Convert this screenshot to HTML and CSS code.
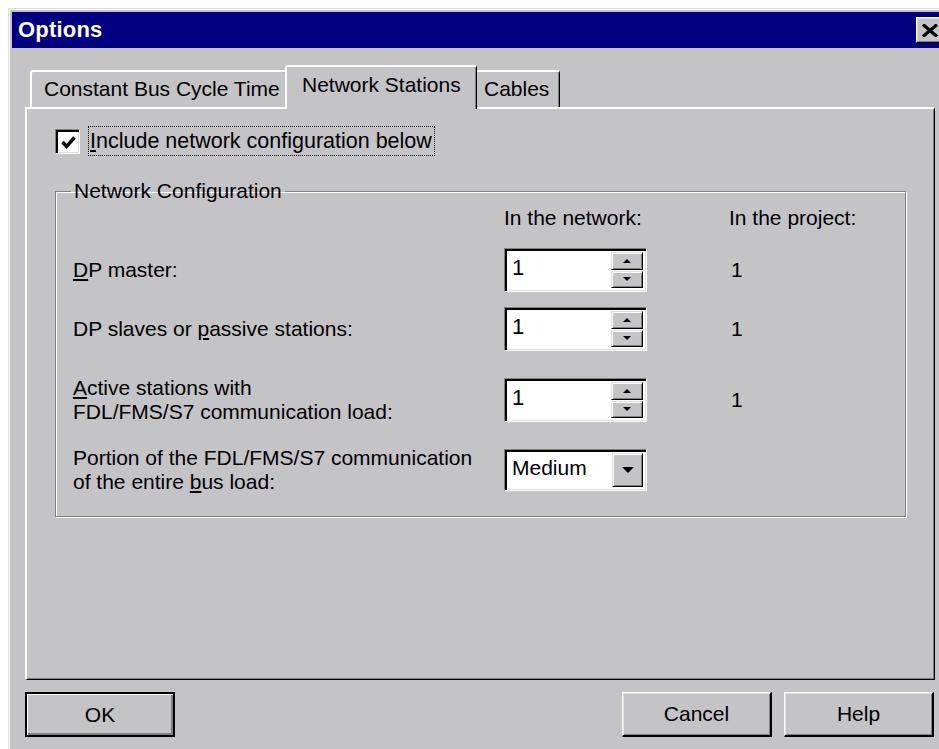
FILE: index.html
```html
<!DOCTYPE html>
<html lang="en">
<head>
<meta charset="utf-8">
<title>Options</title>
<link rel="stylesheet" href="styles.css">
</head>
<body>
<div class="dialog">
  <div class="titlebar">
    <span class="title">Options</span>
    <button class="close" type="button" aria-label="Close">
      <svg width="18" height="13" viewBox="0 0 18 13"><path d="M2 0.5 L16 12.5 M16 0.5 L2 12.5" stroke="#000" stroke-width="3.2" fill="none"/></svg>
    </button>
  </div>
  <div class="dialog-body">
    <div class="tabs">
      <div class="tab tab-first">Constant Bus Cycle Time</div>
      <div class="tab active">Network Stations</div>
      <div class="tab tab-cables">Cables</div>
    </div>
    <div class="panel">
      <label class="check-row">
        <span class="checkbox">
          <svg width="15" height="13" viewBox="0 0 15 13"><path d="M1.5 6 L5.5 10.5 L13.5 1.5" stroke="#000" stroke-width="3.4" fill="none"/></svg>
        </span>
        <span class="focus"><u>I</u>nclude network configuration below</span>
      </label>

      <fieldset class="group">
        <legend>Network Configuration</legend>
        <div class="group-body">
          <div class="row head">
            <span></span>
            <span>In the network:</span>
            <span class="proj">In the project:</span>
          </div>
          <div class="row r1">
            <span class="lbl"><u>D</u>P master:</span>
            <div class="spin">
              <span class="value">1</span>
              <span class="spin-btns"><span class="sbtn"><i class="up"></i></span><span class="sbtn"><i class="down"></i></span></span>
            </div>
            <span class="proj num">1</span>
          </div>
          <div class="row r2">
            <span class="lbl">DP slaves or <u>p</u>assive stations:</span>
            <div class="spin">
              <span class="value">1</span>
              <span class="spin-btns"><span class="sbtn"><i class="up"></i></span><span class="sbtn"><i class="down"></i></span></span>
            </div>
            <span class="proj num">1</span>
          </div>
          <div class="row r3">
            <span class="lbl"><u>A</u>ctive stations with<br>FDL/FMS/S7 communication load:</span>
            <div class="spin">
              <span class="value">1</span>
              <span class="spin-btns"><span class="sbtn"><i class="up"></i></span><span class="sbtn"><i class="down"></i></span></span>
            </div>
            <span class="proj num">1</span>
          </div>
          <div class="row r4">
            <span class="lbl">Portion of the FDL/FMS/S7 communication<br>of the entire <u>b</u>us load:</span>
            <div class="combo">
              <span class="value">Medium</span>
              <span class="cbtn"><i class="drop"></i></span>
            </div>
            <span></span>
          </div>
        </div>
      </fieldset>
    </div>

    <div class="buttons">
      <button class="btn default" type="button">OK</button>
      <div class="btn-group">
        <button class="btn" type="button">Cancel</button>
        <button class="btn" type="button">Help</button>
      </div>
    </div>
  </div>
</div>
</body>
</html>
```

FILE: styles.css
```css
/* Classic 3D dialog, drawn at 1.5x scale */
html, body {
  margin: 0;
  height: 749px;
  overflow: hidden;
  background: #fff;
}

body {
  padding: 8px 0 0 8px;
  font-family: "Liberation Sans", Arial, sans-serif;
  font-size: 21px;
  line-height: 24px;
  color: #000;
}

u { text-decoration-thickness: 1.5px; text-underline-offset: 2px; }

.dialog {
  width: 940px;
  height: 760px;
  background: #c4c3c6;
  border-top: 1px solid #dcdcdc;
  border-left: 1px solid #dcdcdc;
  box-shadow: inset 1px 1px 0 #fff;
  padding: 3px 3px 0 3px;
}

/* Title bar */
.titlebar {
  height: 36px;
  background: #000080;
  display: flex;
  align-items: center;
  padding: 0 3px 0 6px;
}

.title {
  color: #fff;
  font-weight: bold;
  font-size: 22px;
  letter-spacing: 0.2px;
}

.close {
  margin-left: auto;
  width: 33px;
  height: 26px;
  padding: 0 0 0 4px;
  display: flex;
  align-items: center;
  justify-content: flex-start;
  background: #c4c3c6;
  border: 1px solid;
  border-color: #fff #000 #000 #fff;
  box-shadow: inset -1px -1px 0 #808080, inset 1px 1px 0 #dfdfdf;
}

/* Body below the title */
.dialog-body {
  padding: 17px 17px 0 13px;
}

/* Tab strip */
.tabs {
  display: flex;
  align-items: flex-end;
  height: 42px;
  padding-left: 5px;
  position: relative;
  z-index: 1;
}

.tab {
  height: 37px;
  box-sizing: border-box;
  padding: 5px 0 0 12px;
  background: #c4c3c6;
  border-top: 2px solid #fff;
  border-left: 2px solid #fff;
  border-right: 1px solid #000;
  box-shadow: inset -1px 0 0 #808080;
  border-radius: 3px 3px 0 0;
  white-space: nowrap;
}

.tab-first { width: 257px; }
.tab-cables { width: 84px; padding-left: 8px; border-left: none; }

.tab.active {
  height: 44px;
  width: 192px;
  margin: 0 -1px -2px -2px;
  padding: 6px 0 0 15px;
  position: relative;
  z-index: 2;
}

/* Tab page */
.panel {
  height: 573px;
  box-sizing: border-box;
  border: 2px solid;
  border-color: #fff #000 #000 #fff;
  border-right-width: 1px;
  border-bottom-width: 1px;
  box-shadow: inset -1px -1px 0 #808080;
  padding: 16px 28px 0 28px;
}

.check-row {
  display: flex;
  align-items: center;
  height: 32px;
}

.checkbox {
  width: 25px;
  height: 25px;
  box-sizing: border-box;
  background: #fff;
  border: 1px solid;
  border-color: #808080 #fff #fff #808080;
  box-shadow: inset 2px 2px 0 #000, inset -1px -1px 0 #dfdfdf;
  display: flex;
  align-items: center;
  justify-content: center;
  padding: 2px 0 0 2px;
}

.focus {
  margin-left: 8px;
  padding: 2px 2px 2px 1px;
  border: 1px dotted #000;
  font-size: 21.5px;
}

/* Group box */
.group {
  margin: 22px 0 0 0;
  padding: 0;
  border: 1px solid #808080;
  box-shadow: 1px 1px 0 #fff, inset 1px 1px 0 #fff;
  min-width: 0;
}

.group legend {
  margin-left: 15px;
  padding: 0 3px;
  line-height: 24px;
}

.group-body {
  padding: 3px 0 22px 17px;
}

.row {
  display: grid;
  grid-template-columns: 431px 143px 1fr;
  align-items: center;
}

.proj { padding-left: 82px; white-space: nowrap; }
.num { padding-left: 84px; }

.row.r1 { margin-top: 18px; }
.row.r2 { margin-top: 15px; }
.row.r3 { margin-top: 25px; }
.row.r4 { margin-top: 22px; }

/* Sunken fields */
.spin, .combo {
  box-sizing: border-box;
  height: 44px;
  background: #fff;
  border: 1px solid;
  border-color: #808080 #fff #fff #808080;
  box-shadow: inset 2px 2px 0 #000, inset -1px -1px 0 #dfdfdf;
  display: flex;
  align-items: center;
  padding: 3px 3px 3px 3px;
}

.combo { height: 42px; }

.value {
  flex: 1;
  padding-left: 4px;
  padding-bottom: 4px;
}

.spin .value { font-size: 22px; }

.spin-btns {
  display: flex;
  flex-direction: column;
  gap: 1px;
  width: 32px;
  align-self: stretch;
}

.sbtn, .cbtn {
  flex: 1;
  box-sizing: border-box;
  background: #c4c3c6;
  border: 1px solid;
  border-color: #dfdfdf #000 #000 #dfdfdf;
  box-shadow: inset 1px 1px 0 #fff, inset -1px -1px 0 #808080;
  display: flex;
  align-items: center;
  justify-content: center;
}

.cbtn {
  flex: none;
  width: 31px;
  align-self: stretch;
}

.up, .down, .drop {
  width: 0;
  height: 0;
  border-left: 4px solid transparent;
  border-right: 4px solid transparent;
}

.up { border-bottom: 4px solid #000; }
.down { border-top: 4px solid #000; }

.drop {
  border-left-width: 6px;
  border-right-width: 6px;
  border-top: 6px solid #000;
}

/* Dialog buttons */
.buttons {
  margin-top: 12px;
  display: flex;
  justify-content: space-between;
  padding-right: 1px;
}

.btn-group {
  display: flex;
  gap: 12px;
}

.btn {
  width: 150px;
  height: 45px;
  font: inherit;
  color: #000;
  background: #c4c3c6;
  border: 2px solid;
  border-color: #fff #000 #000 #fff;
  border-width: 1px 2px 2px 1px;
  box-shadow: inset 1px 1px 0 #dfdfdf, inset -1px -1px 0 #808080;
  padding: 0;
}

.btn.default {
  border: 2px solid #000;
  box-shadow: inset 1px 1px 0 #fff, inset -2px -2px 0 #808080;
}
```
